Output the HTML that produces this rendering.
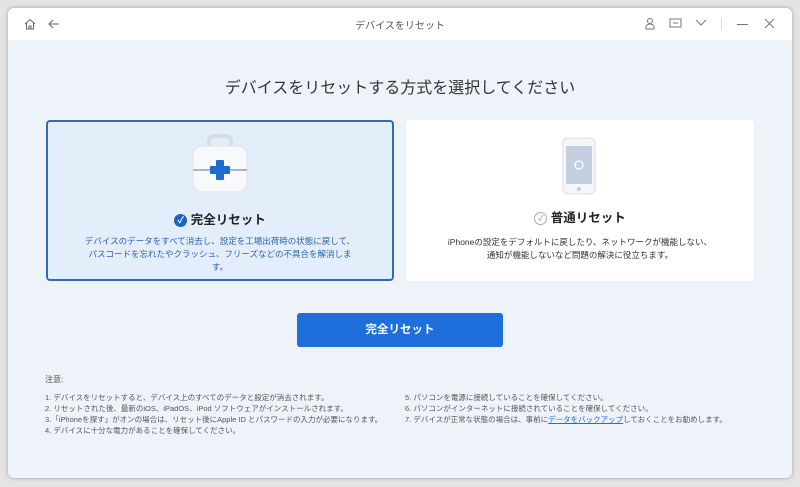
<!DOCTYPE html><html><head><meta charset="utf-8"><style>
body{margin:0;width:800px;height:487px;background:#e4e4e4;font-family:"Liberation Sans","Noto Sans CJK JP",sans-serif;position:relative;overflow:hidden}
.win{position:absolute;left:8px;top:8px;width:784px;height:470px;background:#eef3fa;border-radius:6px;overflow:hidden;box-shadow:0 0 4px rgba(0,0,0,.3)}
.tb{height:32px;background:#fff;position:relative}
.t{position:absolute;left:0;right:0;top:9px;text-align:center;font-size:10px;color:#555}
.a{position:absolute;font-size:11px;color:#666}
h1{position:absolute;left:0;right:0;top:66px;margin:0;text-align:center;font-size:16px;font-weight:normal;color:#333}
.c{position:absolute;top:112px;height:161px;border-radius:4px;text-align:center}
.c1{left:38px;width:344px;height:157px;background:#e4edfa;border:2px solid #2e6db5}
.c2{left:398px;width:348px;background:#fff}
.ti{position:absolute;left:0;right:0;top:87px;font-size:12.5px;font-weight:bold;color:#222}
.d{position:absolute;left:36px;right:36px;top:113px;font-size:8.5px;line-height:13px}
.btn{position:absolute;left:289px;top:305px;width:206px;height:34px;background:#1e6fdc;border-radius:3px;color:#fff;text-align:center;line-height:34px;font-size:11.5px;font-weight:bold}
.n{position:absolute;font-size:7.5px;color:#555;line-height:11px}
</style></head><body><div class="win">
<div class="tb">
<svg class="a" style="left:15px;top:9px" width="14" height="14" viewBox="0 0 14 14" fill="none" stroke="#666"><path d="M2 7L7 2.5 12 7M3.5 6v6h7V6M6 12V9h2v3"/></svg>
<svg class="a" style="left:40px;top:10px" width="12" height="12" viewBox="0 0 12 12" fill="none" stroke="#666"><path d="M11 6H1M5 2L1 6l4 4"/></svg>
<div class="t">デバイスをリセット</div>
<svg class="a" style="left:636px;top:9px" width="12" height="13" viewBox="0 0 12 13" fill="none" stroke="#777"><circle cx="6" cy="4" r="2.5"/><path d="M2 12V10a4 3 0 0 1 8 0v2z"/></svg>
<svg class="a" style="left:661px;top:10px" width="13" height="11" viewBox="0 0 13 11" fill="none" stroke="#777"><rect x="1" y="1" width="11" height="8"/><path d="M4 5h5"/></svg>
<svg class="a" style="left:687px;top:11px" width="12" height="8" viewBox="0 0 12 8" fill="none" stroke="#777"><path d="M1 1l5 5 5-5"/></svg>
<div style="position:absolute;left:713px;top:10px;width:1px;height:12px;background:#ddd"></div>
<div style="position:absolute;left:729px;top:16px;width:11px;height:1px;background:#777"></div>
<svg class="a" style="left:756px;top:10px" width="11" height="11" viewBox="0 0 11 11" stroke="#777"><path d="M1 1l9 9M10 1l-9 9"/></svg>
</div>
<h1>デバイスをリセットする方式を選択してください</h1>
<div class="c c1">
<svg style="position:absolute;left:142px;top:12px" width="60" height="62" viewBox="0 0 60 62"><rect x="19" y="2" width="22" height="14" rx="5" fill="none" stroke="#d6dde8" stroke-width="4"/><rect x="3" y="12" width="54" height="46" rx="9" fill="#f7f9fc" stroke="#dde3ec"/><path d="M3 36h54" stroke="#a9b6c8" stroke-width="2"/><rect x="26" y="26" width="8" height="20" rx="1" fill="#1f6bd0"/><rect x="20" y="32" width="20" height="8" rx="1" fill="#1f6bd0"/></svg>
<div class="ti"><span style="display:inline-block;width:13px;height:13px;border-radius:50%;background:#1f63c2;color:#fff;font-size:9px;line-height:13px;vertical-align:1px">✓</span> 完全リセット</div>
<div class="d" style="color:#2a64b0">デバイスのデータをすべて消去し、設定を工場出荷時の状態に戻して、パスコードを忘れたやクラッシュ、フリーズなどの不具合を解消します。</div>
</div>
<div class="c c2">
<svg style="position:absolute;left:155px;top:16px" width="36" height="60" viewBox="0 0 36 60"><rect x="2" y="2" width="32" height="56" rx="5" fill="#f4f6fa" stroke="#d8dde6"/><rect x="5" y="10" width="26" height="38" fill="#c3cfdf"/><circle cx="18" cy="53" r="2" fill="#ccc"/><circle cx="18" cy="29" r="4" fill="none" stroke="#fff" stroke-width="1.3"/></svg>
<div class="ti"><span style="display:inline-block;width:11px;height:11px;border-radius:50%;border:1px solid #aaa;color:#aaa;font-size:8px;line-height:11px;vertical-align:1px">✓</span> 普通リセット</div>
<div class="d" style="color:#333;top:116px;left:40px;right:40px">iPhoneの設定をデフォルトに戻したり、ネットワークが機能しない、通知が機能しないなど問題の解決に役立ちます。</div>
</div>
<div class="btn">完全リセット</div>
<div class="n" style="left:37px;top:366px;font-size:8px">注意:</div>
<div class="n" style="left:37px;top:384px">1. デバイスをリセットすると、デバイス上のすべてのデータと設定が消去されます。<br>2. リセットされた後、最新のiOS、iPadOS、iPod ソフトウェアがインストールされます。<br>3.「iPhoneを探す」がオンの場合は、リセット後にApple ID とパスワードの入力が必要になります。<br>4. デバイスに十分な電力があることを確保してください。</div>
<div class="n" style="left:397px;top:384px">5. パソコンを電源に接続していることを確保してください。<br>6. パソコンがインターネットに接続されていることを確保してください。<br>7. デバイスが正常な状態の場合は、事前に<span style="color:#1e6fdc;text-decoration:underline">データをバックアップ</span>しておくことをお勧めします。</div>
</div></body></html>
